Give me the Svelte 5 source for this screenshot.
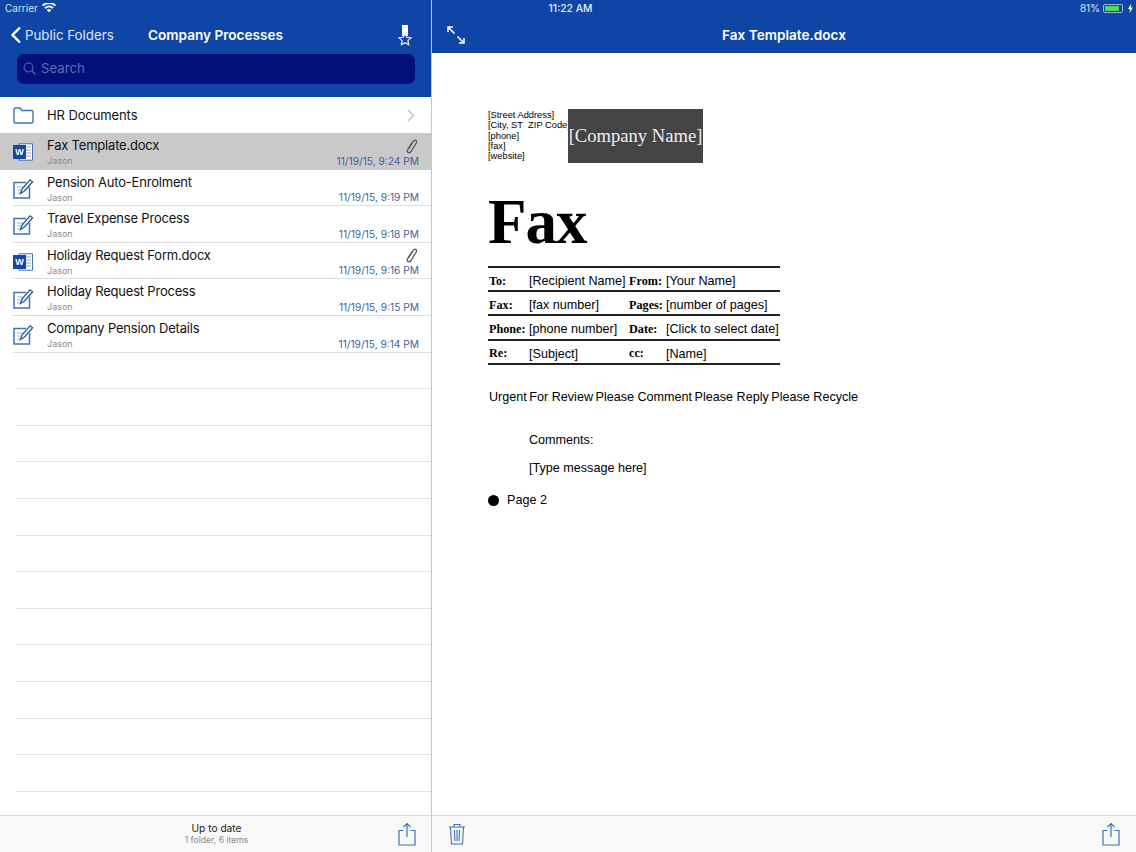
<script>
  const files = [
    { name: 'Fax Template.docx', date: '11/19/15, 9:24 PM', icon: 'word', clip: true, sel: true },
    { name: 'Pension Auto-Enrolment', date: '11/19/15, 9:19 PM', icon: 'note' },
    { name: 'Travel Expense Process', date: '11/19/15, 9:18 PM', icon: 'note' },
    { name: 'Holiday Request Form.docx', date: '11/19/15, 9:16 PM', icon: 'word', clip: true },
    { name: 'Holiday Request Process', date: '11/19/15, 9:15 PM', icon: 'note' },
    { name: 'Company Pension Details', date: '11/19/15, 9:14 PM', icon: 'note' }
  ];
  const blanks = Array.from({ length: 12 });
  const fax = [
    ['To:', '[Recipient Name]', 'From:', '[Your Name]'],
    ['Fax:', '[fax number]', 'Pages:', '[number of pages]'],
    ['Phone:', '[phone number]', 'Date:', '[Click to select date]'],
    ['Re:', '[Subject]', 'cc:', '[Name]']
  ];
  const checks = ['Urgent', 'For Review', 'Please Comment', 'Please Reply', 'Please Recycle'];
</script>

{#snippet share(cls)}
  <svg class={cls} width="18" height="24" viewBox="0 0 18 24" fill="none" stroke="#3f73b5" stroke-width="1.2">
    <path d="M5.500 8.500H1v14.500h16V8.500h-4.500" />
    <path d="M9 15V1.500M5.500 5 9 1.500 12.500 5" />
  </svg>
{/snippet}

<div class="screen">
  <div class="status">
    <span class="carrier">Carrier
      <svg width="14" height="10" viewBox="0 0 14 10"><path d="M7 9.500 4.800 7a3.200 3.200 0 0 1 4.400 0zM3.600 5.800 2.300 4.400a7 7 0 0 1 9.400 0l-1.300 1.400a5.100 5.100 0 0 0-6.800 0zM1.200 3.300 0 2a10 10 0 0 1 14 0l-1.200 1.300a8.300 8.300 0 0 0-11.600 0z" fill="#fff"/></svg>
    </span>
    <span class="clock">11:22 AM</span>
    <span class="batt">81%
      <span class="cell"><span class="charge"></span></span>
      <svg class="bolt" width="5" height="9" viewBox="0 0 5 9"><path d="M3 0 0 5h2L1.500 9 5 3.500H3z" fill="#fff"/></svg>
    </span>
  </div>

  <section class="left">
    <header class="lhead">
      <div class="nav">
        <span class="back">
          <svg width="12" height="18" viewBox="0 0 12 18" fill="none" stroke="#fff" stroke-width="2.400"><path d="M10 1.500 2.500 9l7.500 7.500"/></svg>
          Public Folders
        </span>
        <span class="title">Company Processes</span>
        <svg class="pin" width="14" height="23" viewBox="0 0 14 23">
          <path d="M4 1h6v11H4z" fill="#fff"/>
          <path d="M7 9.500l1.800 3.800 4.200.5-3.100 2.900.8 4.100L7 18.700l-3.700 2.100.8-4.100L1 13.800l4.200-.5z" fill="#0f46a5" stroke="#fff" stroke-width="1.100"/>
        </svg>
      </div>
      <div class="search">
        <svg width="13" height="13" viewBox="0 0 13 13" fill="none" stroke="#5f6db0" stroke-width="1.100"><circle cx="5.500" cy="5.500" r="4.500"/><path d="M8.800 8.800 12.500 12.500"/></svg>
        <span>Search</span>
      </div>
    </header>

    <div class="list">
      <div class="folder">
        <svg class="ficon" width="21" height="17" viewBox="0 0 21 17" fill="none" stroke="#3f73b5" stroke-width="1.400"><path d="M1 4V2.500q0-1.500 1.500-1.500h4.500l2 2.500h9.500q1.500 0 1.500 1.500v9.500q0 1.500-1.500 1.500H2.500Q1 16 1 14.500z"/></svg>
        <span class="fname">HR Documents</span>
        <svg class="chev" width="8" height="13" viewBox="0 0 8 13" fill="none" stroke="#c4c4c8" stroke-width="1.500"><path d="M1 1l5.500 5.500L1 12"/></svg>
      </div>

      {#each files as f}
        <div class="row" class:sel={f.sel}>
          <div class="ic">
            {#if f.icon === 'word'}
              <svg width="20" height="18" viewBox="0 0 20 18"><path d="M6 .8h13.500v16.400H6z" fill="#fff" stroke="#3f73b5"/><path d="M13 4h5M13 7h5M13 10h5M13 13h5" stroke="#8aa5cf"/><path d="M0 2h13v14H0z" fill="#1746a6"/><text x="6.500" y="12" class="w">W</text></svg>
            {:else}
              <svg width="21" height="21" viewBox="0 0 21 21" fill="none" stroke="#3f73b5"><path d="M13 4.500H1v15.500h15.500V9" stroke-width="1.500"/><path d="M4 9h6M4 12h4M4 15h3" stroke="#9bb4d8" stroke-width="1"/><path d="M7.500 15.500 9 11 17 1.800l2.600 2L11.500 13z" stroke="#1f58a8" stroke-width="1.300" fill="#fff"/></svg>
            {/if}
          </div>
          <div class="meta">
            <div class="name">{f.name}</div>
            <div class="who">Jason</div>
          </div>
          <div class="side">
            {#if f.clip}
              <svg class="clip" width="12" height="15" viewBox="0 0 12 15" fill="none" stroke="#555" stroke-width="1.300"><path d="M2.500 10 7.500 2Q9 .5 10 1.500T10 4.500L5 12.500Q3.500 14.500 2 13.500T2 10L6 3.500"/></svg>
            {/if}
            <div class="date">{f.date}</div>
          </div>
        </div>
      {/each}

      {#each blanks as _}
        <div class="blank"></div>
      {/each}
    </div>

    <footer class="foot lfoot">
      <div class="state">
        <div class="up">Up to date</div>
        <div class="count">1 folder, 6 items</div>
      </div>
      {@render share('lshare')}
    </footer>
  </section>

  <section class="right">
    <header class="rhead">
      <svg class="expand" width="18" height="18" viewBox="0 0 18 18" fill="none" stroke="#fff" stroke-width="1.500"><path d="M7.500 7.500 1.500 1.500"/><path d="M1 6V1h5"/><path d="M10.500 10.500l6 6"/><path d="M17 12v5h-5"/></svg>
      <span class="dtitle">Fax Template.docx</span>
    </header>

    <main class="doc">
      <div class="letter">
        <div class="addr">
          <div>[Street Address]</div>
          <div>[City, ST&nbsp; ZIP Code]</div>
          <div>[phone]</div>
          <div>[fax]</div>
          <div>[website]</div>
        </div>
        <div class="company">[Company Name]</div>
      </div>

      <h1>Fax</h1>

      <div class="table">
        {#each fax as r}
          <div class="tr">
            <b>{r[0]}</b><span>{r[1]}</span><b>{r[2]}</b><span>{r[3]}</span>
          </div>
        {/each}
      </div>

      <div class="checks">
        {#each checks as c}<span>{c}</span>{/each}
      </div>

      <p class="comments">Comments:</p>
      <p class="message">[Type message here]</p>
      <div class="page2"><span class="dot"></span>Page 2</div>
    </main>

    <footer class="foot rfoot">
      <svg width="18" height="22" viewBox="0 0 18 22" fill="none" stroke="#3f73b5" stroke-width="1.100"><path d="M1 4h16M6 4V1.500h6V4M2.500 4l1 17h11l1-17M6.500 7l.4 11M9 7v11M11.500 7l-.4 11"/></svg>
      {@render share('')}
    </footer>
  </section>
</div>

<style>
  :global(body) { margin: 0; background: #fff; }
  .screen {
    position: relative;
    width: 1136px;
    height: 852px;
    overflow: hidden;
    display: flex;
    font-family: Inter, "Liberation Sans", sans-serif;
    color: #111;
  }
  .status {
    position: absolute;
    z-index: 2;
    inset: 0 0 auto 0;
    height: 16px;
    padding: 0 3px 0 5px;
    display: grid;
    grid-template-columns: 1fr auto 1fr;
    align-items: center;
    font-size: 10px;
    color: #d7e0f2;
  }
  .carrier { display: flex; align-items: center; gap: 4px; }
  .clock { font-size: 10.300px; font-weight: 500; color: #e6ecf8; padding-left: 3px; }
  .batt { display: flex; align-items: center; justify-content: flex-end; gap: 2px; }
  .cell {
    width: 20px; height: 9px;
    border: 1px solid #9fb4dc; border-radius: 2px;
    padding: 1px; box-sizing: border-box;
    margin-left: 1px;
  }
  .charge { display: block; height: 100%; width: 85%; background: #4cd964; }
  .bolt { margin-left: 3px; }

  .left {
    width: 431px; flex: none;
    display: flex; flex-direction: column;
  }
  .right {
    flex: 1; min-width: 0;
    display: flex; flex-direction: column;
    border-left: 1px solid #c4c6cc;
    box-sizing: border-box;
  }
  .lhead {
    height: 97px; box-sizing: border-box; flex: none;
    background: #0f46a5;
    padding-top: 16px;
  }
  .nav {
    height: 38px;
    display: flex; align-items: center;
    padding: 0 19px 0 10px;
    color: #fff;
  }
  .back { display: flex; align-items: center; gap: 3px; font-size: 13.300px; color: #dfe7f6; width: 138px; }
  .title { font-size: 13.600px; font-weight: 600; flex: 1; }
  .search {
    margin: 0 16px 0 17px;
    height: 30px;
    border-radius: 7px;
    background: #03107a;
    display: flex; align-items: center; gap: 5px;
    padding: 0 6px 2px;
    box-sizing: border-box;
    color: #5f6db0;
    font-size: 13.200px;
  }
  .list { flex: 1; min-height: 0; overflow: hidden; }
  .folder {
    height: 36px;
    display: flex; align-items: center;
    padding-left: 13px; padding-right: 16px;
  }
  .ficon { margin-right: 13px; }
  .fname { flex: 1; font-size: 13px; letter-spacing: -0.100px; }
  .row {
    height: 36.600px;
    box-sizing: border-box;
    margin-left: 13px;
    padding-right: 12px;
    display: flex; align-items: stretch;
    border-bottom: 1px solid #dedee2;
    position: relative;
  }
  .row.sel { background: #c9c9c9; margin-left: 0; padding-left: 13px; border-bottom: 0; }
  .ic { width: 34px; flex: none; display: flex; align-items: center; padding-top: 2px; }
  .meta { flex: 1; min-width: 0; padding-top: 4px; }
  .name { font-size: 13px; line-height: 17px; letter-spacing: -0.200px; }
  .who { font-size: 9px; color: #8a8a8e; line-height: 12px; margin-top: 1px; }
  .side {
    display: flex; flex-direction: column;
    align-items: flex-end; justify-content: flex-end;
    padding-bottom: 2px;
    gap: 1px;
  }
  .sel .side { padding-bottom: 3px; }
  .clip { margin-right: 1px; }
  .date { font-size: 10.200px; color: #3f5f9f; line-height: 12px; }
  .blank {
    height: 36.600px; box-sizing: border-box;
    margin-left: 16px;
    border-bottom: 1px solid #e4e4e8;
  }
  .w { font: 700 9px "Liberation Sans", sans-serif; fill: #fff; text-anchor: middle; }
  .foot {
    height: 37px; flex: none; box-sizing: border-box;
    background: #f8f8f9;
    border-top: 1px solid #d8d8dc;
    display: flex; align-items: center;
  }
  .lfoot { padding-right: 15px; }
  .state { flex: 1; text-align: center; padding-left: 35px; }
  .up { font-size: 10.200px; line-height: 13px; color: #222; }
  .count { font-size: 8.600px; line-height: 11px; color: #8a8a8e; }
  .rfoot { justify-content: space-between; padding: 0 16px; }

  .rhead {
    height: 53px; flex: none; box-sizing: border-box;
    background: #0f46a5;
    padding-top: 16px;
    display: flex; align-items: center; justify-content: center;
    position: relative;
    color: #fff;
  }
  .expand { position: absolute; left: 15px; top: 26px; }
  .dtitle { font-size: 13.600px; font-weight: 600; }

  .doc {
    flex: 1; min-height: 0;
    padding: 56px 0 0 55px;
    font-family: "Liberation Sans", sans-serif;
    color: #000;
  }
  .letter { display: flex; }
  .addr { font-size: 9.300px; line-height: 10.300px; padding-top: 1px; width: 81px; white-space: nowrap; }
  .company {
    width: 135px; height: 54px;
    background: #444446;
    color: #eee;
    font: 18.600px "Liberation Serif", serif;
    display: flex; align-items: center; justify-content: center;
    white-space: nowrap;
  }
  h1 {
    margin: 24px 0 0;
    font: 700 63px/70px "Liberation Serif", serif;
    letter-spacing: -1px;
  }
  .table {
    width: 292px;
    margin: 9px 0 0 1px;
    border-top: 2px solid #222;
  }
  .tr {
    display: grid;
    grid-template-columns: 40px 100px 37px 1fr;
    height: 24.200px;
    padding: 4px 0 0 1px;
    box-sizing: border-box;
    align-items: center;
    border-bottom: 2px solid #222;
    font-size: 12.600px;
    white-space: nowrap;
  }
  .tr b { font: 700 12.200px "Liberation Serif", serif; }
  .checks { display: flex; gap: 2.500px; margin-top: 24px; padding-left: 2px; font-size: 12.600px; line-height: 16px; white-space: nowrap; }
  .comments { margin: 27px 0 0 42px; font-size: 12.600px; line-height: 16px; }
  .message { margin: 12px 0 0 42px; font-size: 12.600px; line-height: 16px; }
  .page2 { display: flex; align-items: center; margin: 16.500px 0 0 1px; font-size: 12.600px; line-height: 16px; }
  .dot { width: 11px; height: 11px; border-radius: 50%; background: #000; margin-right: 8px; }
  h1, .addr { margin-left: 1px; }
  h1 { margin-top: 24px; }
  .letter .addr { margin-left: 1px; width: 80px; }
</style>
